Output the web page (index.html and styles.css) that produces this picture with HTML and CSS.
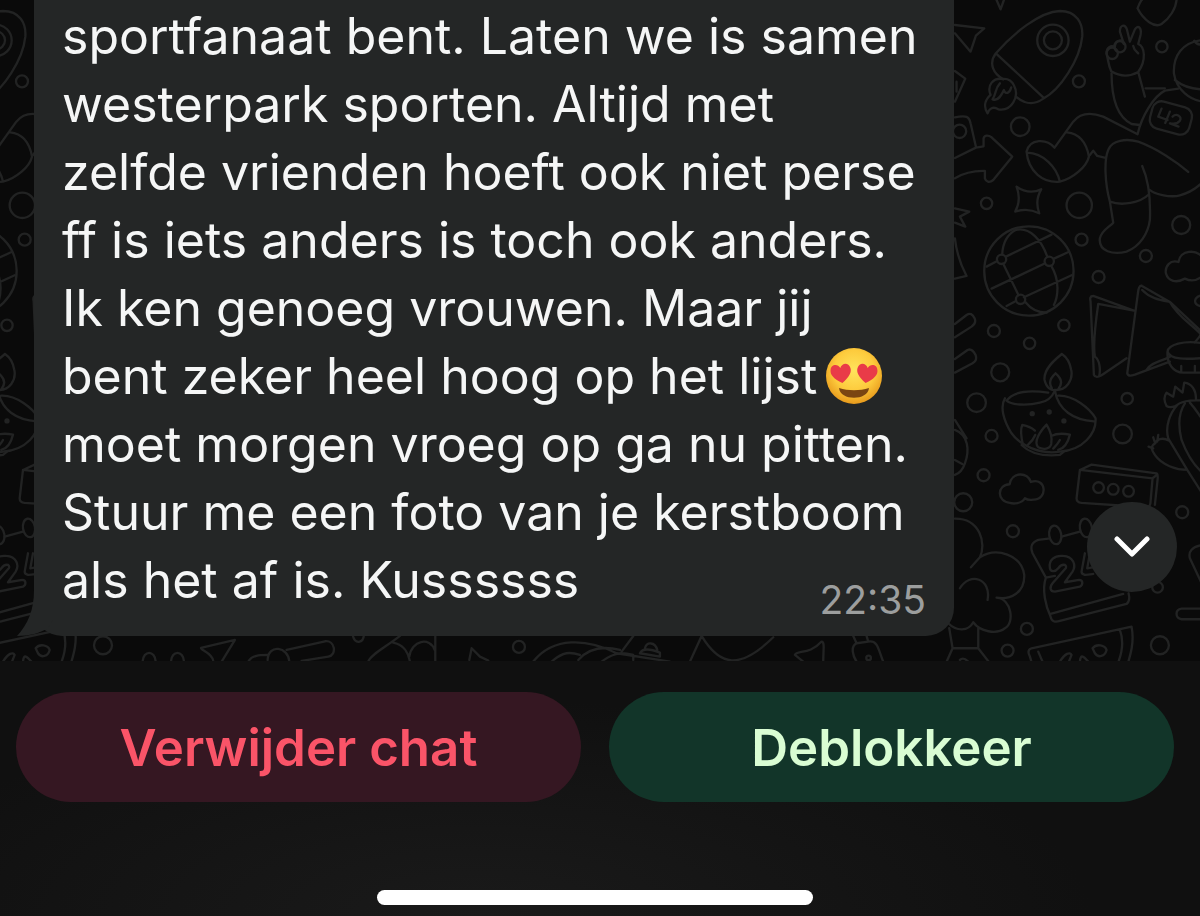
FILE: index.html
```html
<!DOCTYPE html>
<html lang="nl">
<head>
	<meta charset="utf-8">
	<meta name="viewport" content="width=device-width, initial-scale=1">
	<title>Chat</title>
	<link rel="stylesheet" href="styles.css">
</head>
<body>
	<main class="chat">
		<svg class="doodles" aria-hidden="true">
			<defs>
				<g id="tile">
					<!-- rocket, hand, runner -->
					<path d="M168 160C220 100 300 35 360 33C410 33 430 70 427 110C420 180 360 270 310 296C270 325 240 300 228 290M168 160C145 190 160 220 190 238M168 160L310 292"/>
					<circle cx="339" cy="121" r="47"/><circle cx="339" cy="121" r="27"/>
					<path d="M190 237C160 232 140 255 152 285C135 300 130 320 143 340C148 325 160 318 175 328C215 335 240 290 222 256C215 242 202 236 190 237M180 250C165 265 170 280 158 298C175 305 185 285 192 270C196 285 210 280 214 262"/>
					<circle cx="417" cy="244" r="18"/><circle cx="241" cy="380" r="28"/>
					<path d="M170 0L182 28L192 0M45 75L133 85L108 107L92 155L45 100M45 213L76 236L45 305M50 245V275"/>
					<path d="M45 352C80 345 88 350 92 370L108 440M45 474L108 443L131 439V415C134 405 145 405 155 412L217 470L160 540C148 550 138 545 135 535V513C100 512 70 520 45 535"/>
					<circle cx="59" cy="394" r="20"/><circle cx="140" cy="610" r="17"/><circle cx="418" cy="616" r="38"/>
					<path d="M230 560Q266 585 304 568Q284 602 298 640Q262 622 226 635Q245 600 230 560ZM45 625L88 635L60 650L76 680L45 668"/>
					<path d="M344 443C320 415 270 415 260 455C265 515 310 550 360 545C400 535 440 500 447 470C440 425 415 400 382 397M344 443L400 365C420 340 450 335 490 350L593 403C605 350 640 290 675 272L715 266M262 458C310 460 350 500 360 545M600 375L575 372C530 350 515 290 515 220"/>
					<path d="M514 214C505 195 505 180 500 160C500 140 515 135 525 142C525 120 545 115 552 132L540 95C540 75 555 70 561 88L570 125L585 88C595 72 606 85 602 105L595 132C615 140 620 180 595 216C570 230 540 230 514 214M595 216L615 290M580 138C582 150 590 155 595 160M617 265H675"/>
					<circle cx="517" cy="160" r="17"/><circle cx="540" cy="140" r="17"/><circle cx="666" cy="140" r="17"/>
					<path d="M593 25C600 5 605 0 608 -3M593 25C610 60 645 85 665 72C690 55 708 25 710 0"/>
					<path d="M790 120C725 125 700 170 702 220C710 270 750 300 790 305M705 240C730 260 760 268 790 268M763 122C770 135 780 135 790 133"/>
					<rect x="632" y="312" width="122" height="84" rx="28" transform="rotate(15 693 354)"/>
					<path d="M665 326L655 350L683 360M690 335L676 369M698 350C710 338 728 350 720 362C712 372 698 372 690 370L716 380" stroke-width="7"/>
					<path d="M450 465L460 452L472 468L497 474M510 605C495 550 492 480 505 450C515 420 560 415 595 425C650 445 710 485 745 516M510 605C545 618 600 610 628 582M630 570C640 580 690 595 720 586C750 578 770 565 790 545M607 498C630 550 632 610 630 660C625 700 600 740 560 755C520 765 475 755 480 715C485 690 510 680 520 668L510 605"/>
					<circle cx="724" cy="675" r="27"/><circle cx="425" cy="719" r="18"/><circle cx="618" cy="768" r="18"/><circle cx="476" cy="831" r="18"/>
					<!-- globe -->
					<circle cx="267" cy="813" r="134"/>
					<path d="M140 800L172 783M198 770L335 704M155 866L316 790M342 776L384 757M252 892L395 826M228 903L200 918M227 690C200 705 188 735 187 764M190 791L236 886M227 690C270 680 305 720 322 770M334 798C360 840 355 890 342 915M256 906C275 930 300 938 320 938"/>
					<circle cx="185" cy="778" r="14"/><circle cx="328" cy="784" r="14"/><circle cx="242" cy="898" r="14"/>
					<path d="M45 715C50 760 65 800 80 828L45 836M45 972L80 945C90 938 98 942 104 955C110 968 102 975 95 980L45 1012M45 1077L83 1050C95 1045 102 1055 107 1065C112 1080 105 1085 98 1090L45 1118"/>
					<circle cx="162" cy="993" r="18"/><circle cx="372" cy="976" r="17"/><circle cx="269" cy="1030" r="17"/><circle cx="181" cy="1117" r="27"/><circle cx="110" cy="1208" r="28"/><circle cx="155" cy="1308" r="18"/><circle cx="562" cy="1196" r="17"/><circle cx="548" cy="1302" r="28"/>
					<path d="M790 775C770 745 720 750 716 786C690 778 675 800 678 820C685 845 710 850 735 836C755 846 775 840 790 826M790 885C760 890 755 915 790 920"/>
					<!-- folded cards -->
					<path d="M582 932L460 888C450 888 450 895 452 905L462 1125C465 1133 475 1132 485 1126L560 1075M582 932L475 912C468 960 458 1030 465 1070C480 1080 482 1110 478 1128M605 857C598 855 595 870 594 880L562 1120C565 1130 575 1127 585 1124L690 1085M605 857L690 906L780 990C788 1000 780 1010 765 1027M607 870C630 895 660 900 690 906C710 945 750 970 780 1000M620 1110C635 1085 665 1085 690 1070"/>
					<path d="M790 1030C730 1020 685 1035 683 1055C690 1080 740 1078 790 1074M683 1055C680 1090 700 1118 730 1118H790M724 1115V1098M765 1117V1098"/>
					<!-- oil lamp -->
					<path d="M366 1062C350 1075 310 1105 314 1140C320 1165 335 1172 345 1170C380 1172 400 1140 394 1110C390 1085 378 1070 366 1062M347 1120C330 1135 326 1150 336 1165M347 1120C365 1135 370 1150 355 1168M345 1172C335 1195 320 1205 300 1208C260 1218 215 1215 200 1202C220 1175 270 1170 325 1178M345 1172C355 1230 400 1260 462 1264M355 1187C400 1185 450 1225 467 1255C470 1300 430 1350 360 1355C300 1365 240 1335 215 1300C190 1260 180 1220 195 1195"/>
					<path d="M250 1338C243 1310 240 1290 247 1275C262 1278 275 1283 285 1292M320 1274C300 1295 280 1325 295 1342C310 1350 330 1348 334 1332C338 1312 330 1290 320 1274M334 1308C350 1300 370 1300 390 1304C385 1325 375 1345 355 1350M264 1335C275 1325 282 1315 286 1305M340 1346C350 1335 355 1330 360 1320"/>
					<path d="M245 1335C270 1360 310 1370 360 1365L372 1355"/>
					<g class="dots"><circle cx="277" cy="1241" r="8"/><circle cx="328" cy="1236" r="8"/><circle cx="372" cy="1263" r="8"/></g>
					<!-- plant -->
					<path d="M680 1218C670 1200 675 1185 680 1178L700 1190L706 1160L728 1178L733 1148C755 1150 770 1170 768 1200M680 1218C690 1225 705 1220 712 1215C730 1200 770 1200 790 1202M712 1215C690 1240 675 1280 685 1315L742 1410L790 1485M735 1210C715 1240 715 1280 725 1320C740 1360 765 1400 790 1420M750 1208C770 1230 780 1250 790 1260M688 1322C665 1310 650 1320 646 1330C630 1340 635 1350 645 1365C665 1395 710 1410 742 1410M646 1330L640 1312M640 1345L626 1340M652 1325L655 1305"/>
					<path d="M45 1260L80 1315M45 1290C85 1305 90 1350 75 1390C70 1405 58 1420 45 1425M45 1380L67 1392"/>
					<circle cx="131" cy="1426" r="18"/><circle cx="70" cy="1507" r="27"/><circle cx="219" cy="1594" r="18"/><circle cx="727" cy="1537" r="18"/><circle cx="653" cy="1762" r="16"/><circle cx="261" cy="1887" r="18"/><circle cx="203" cy="1952" r="18"/><circle cx="660" cy="1936" r="27"/>
					<path d="M210 1509C170 1505 170 1455 209 1453C215 1415 265 1415 273 1446C320 1430 325 1500 280 1499C265 1502 255 1495 255 1495C245 1512 220 1512 210 1509"/>
					<path d="M420 1410L410 1495C410 1505 415 1508 425 1509L620 1522C630 1522 632 1515 632 1505L638 1435L420 1410L455 1394L650 1420C655 1422 654 1430 653 1440L645 1515M638 1435L652 1424"/>
					<circle cx="476" cy="1463" r="16"/><circle cx="520" cy="1468" r="16"/><circle cx="566" cy="1474" r="16"/>
					<!-- tree -->
					<path d="M45 1556C120 1555 140 1630 120 1672L93 1702M120 1672C170 1640 245 1665 253 1725C255 1780 210 1800 170 1793M60 1765C90 1715 155 1735 143 1800M170 1793C215 1795 225 1870 195 1885C170 1905 120 1895 100 1867C85 1895 50 1895 25 1870M28 1885L38 1945L18 1990M38 1945H115L150 1990M115 1945V1885M60 1980C70 1970 80 1980 85 1985"/>
					<!-- calendar -->
					<path d="M325 1616L295 1620C270 1630 272 1645 278 1660L318 1733C305 1770 318 1820 332 1850C335 1865 345 1868 360 1863L560 1812C570 1805 570 1795 566 1780M332 1842L550 1782M365 1610L420 1595M318 1733L345 1728"/>
					<ellipse cx="346" cy="1605" rx="18" ry="28" transform="rotate(-10 346 1605)"/><ellipse cx="438" cy="1584" rx="18" ry="28" transform="rotate(-10 438 1584)"/>
					<path d="M330 1705C325 1680 345 1665 370 1668C400 1670 410 1695 398 1715L375 1747L418 1740C430 1740 430 1755 420 1760L345 1775C330 1775 328 1762 338 1750L378 1704C382 1692 365 1690 355 1705C345 1718 332 1715 330 1705M435 1660L425 1715C425 1728 440 1725 460 1722M450 1660L442 1705L470 1700"/>
					<path d="M790 1635C755 1640 745 1655 750 1675L790 1760M790 1826H725C705 1828 705 1855 725 1858H790"/>
					<!-- melon slice -->
					<path d="M575 1880L275 1945C262 1950 265 1960 270 1970L285 2020M575 1880C585 1930 570 1970 555 2020M540 1890C555 1930 545 1970 525 2010M295 1955L310 1990M458 1945C470 1930 495 1935 500 1950C495 1970 475 1975 465 1960ZM360 1985C375 1960 390 1955 395 1965L385 1990M420 1985C422 1960 432 1970 445 1985"/>
				</g>
			</defs>
			<g transform="scale(.3333)">
				<use href="#tile" x="2820"/>
				<use href="#tile" x="-351"/>
				<!-- strip under the message -->
				<g transform="translate(0 1800)">
					<path d="M428 185C430 150 465 150 467 185M513 185C515 150 550 150 552 185M640 185C640 160 600 150 603 144L705 120L665 185M745 185C755 165 780 165 803 165M803 180C805 130 865 140 868 185M860 150L975 124C1005 120 1012 165 985 170L905 183M1058 105C1065 135 1090 130 1092 105M1105 185C1110 165 1160 140 1200 108M1180 128C1215 135 1225 160 1230 185M1228 170C1235 120 1290 110 1304 150M1306 108V185M1408 180L1415 145L1440 170L1465 182"/>
					<circle cx="1557" cy="141" r="18"/>
					<path d="M1600 185C1660 110 1760 115 1850 160L2010 185M1655 185C1690 155 1710 155 1740 165M1735 180C1770 140 1820 140 1860 150M1805 185C1850 150 1880 160 1900 165V180M1865 155L1900 108M1920 160C1930 140 1960 150 1980 158V170L1920 160M1935 145C1940 125 1965 125 1972 150M2070 185L2105 108C2160 200 2220 210 2320 112M2385 165C2390 150 2430 165 2465 125C2475 125 2470 150 2470 185M2385 165L2410 185M2560 108L2570 130C2550 140 2560 170 2570 185M2600 108L2605 125C2635 120 2635 150 2650 185M2570 130L2605 125"/>
					<circle cx="2606" cy="174" r="7"/>
				</g>
			</g>
		</svg>

		<article class="bubble">
			<svg class="tail" viewBox="0 0 36 46" aria-hidden="true"><path d="M17 0C17 20 11 34 0 46C12 46 24 43 31 38L36 30V0Z"/></svg>
			<p class="message">
				sportfanaat bent. Laten we is samen<br>
				westerpark sporten. Altijd met<br>
				zelfde vrienden hoeft ook niet perse<br>
				ff is iets anders is toch ook anders.<br>
				Ik ken genoeg vrouwen. Maar jij<br>
				bent zeker heel hoog op het lijst<svg class="emoji" viewBox="0 0 56 56" role="img" aria-label="Gezicht met hartjesogen">
					<defs>
						<radialGradient id="face" cx=".5" cy=".4" r=".6">
							<stop offset="0" stop-color="#ffe45c"/>
							<stop offset=".6" stop-color="#fdcb3d"/>
							<stop offset="1" stop-color="#e89a1c"/>
						</radialGradient>
						<path id="heart" d="M0 10C-8 5 -11 0 -10 -4C-9 -10 -2 -10 0 -5C2 -10 9 -10 10 -4C11 0 8 5 0 10Z"/>
					</defs>
					<circle cx="28" cy="28" r="28" fill="url(#face)"/>
					<use href="#heart" transform="translate(15 25) rotate(-8)" fill="#e93b48"/>
					<use href="#heart" transform="translate(41 25) rotate(8)" fill="#e93b48"/>
					<path d="M13 40C22 43 34 43 43 40C42 53 14 53 13 40Z" fill="#7a4512"/>
				</svg><br>
				moet morgen vroeg op ga nu pitten.<br>
				Stuur me een foto van je kerstboom<br>
				als het af is. Kussssss
			</p>
			<time class="time" datetime="22:35">22:35</time>
		</article>

		<button class="scroll_down" type="button" aria-label="Naar beneden">
			<svg viewBox="0 0 36 22" aria-hidden="true"><path d="M3 3L18 18L33 3"/></svg>
		</button>
	</main>

	<footer class="bottom_bar">
		<div class="actions">
			<button class="action delete" type="button">Verwijder chat</button>
			<button class="action unblock" type="button">Deblokkeer</button>
		</div>
		<div class="home_indicator"></div>
	</footer>
</body>
</html>
```
FILE: styles.css
```css
*{
	box-sizing: border-box;
	margin: 0;
	padding: 0;
}
body
{
	display: flex;
	flex-direction: column;
	min-height: 100vh;
	background-color: #0a0a0a;
	color: #f5f6f6;
	font-family: Inter, "Liberation Sans", sans-serif;
}
button
{
	border: none;
	font-family: inherit;
	cursor: pointer;
}
.chat
{
	position: relative;
	flex: 1;
	padding: 0 246px 25px 34px;
	overflow: hidden;
}
.doodles
{
	position: absolute;
	top: 0;
	left: 0;
	width: 100%;
	height: 100%;
	fill: none;
	stroke: #222323;
	stroke-width: 7;
	stroke-linecap: round;
	stroke-linejoin: round;
}
.dots
{
	fill: #222323;
	stroke: none;
}
.bubble
{
	position: relative;
	display: grid;
	padding: 2px 28px 22px;
	border-radius: 0 0 28px 28px;
	background-color: #242626;
}
.tail
{
	position: absolute;
	left: -17px;
	bottom: 0;
	width: 36px;
	height: 46px;
	fill: #242626;
}
.message, .time
{
	grid-area: 1 / 1;
}
.message
{
	position: relative;
	font-size: 50px;
	line-height: 68px;
	white-space: nowrap;
}
.emoji
{
	width: 56px;
	height: 56px;
	margin-left: 9px;
	vertical-align: -10px;
}
.time
{
	align-self: end;
	justify-self: end;
	color: #9c9e9e;
	font-size: 39px;
	line-height: 28px;
}
.scroll_down
{
	position: absolute;
	right: 23px;
	bottom: 69px;
	display: flex;
	justify-content: center;
	align-items: center;
	width: 90px;
	height: 90px;
	border-radius: 50%;
	background-color: #242626;
}
.scroll_down svg
{
	width: 36px;
	height: 22px;
	fill: none;
	stroke: #fff;
	stroke-width: 5;
	stroke-linecap: round;
	stroke-linejoin: round;
}
.bottom_bar
{
	display: flex;
	flex-direction: column;
	align-items: center;
	padding: 31px 26px 11px 16px;
	background: radial-gradient(ellipse at 40% 100%, #1a1a1a, #101010 60%);
}
.actions
{
	display: flex;
	gap: 28px;
	width: 100%;
	margin-bottom: 88px;
}
.action
{
	flex: 1;
	height: 110px;
	border-radius: 55px;
	font-size: 51px;
	font-weight: 600;
}
.delete
{
	background-color: #351722;
	color: #fa5468;
}
.unblock
{
	background-color: #123529;
	color: #d9fdd3;
}
.home_indicator
{
	width: 436px;
	height: 15px;
	border-radius: 8px;
	background-color: #fff;
}
```
